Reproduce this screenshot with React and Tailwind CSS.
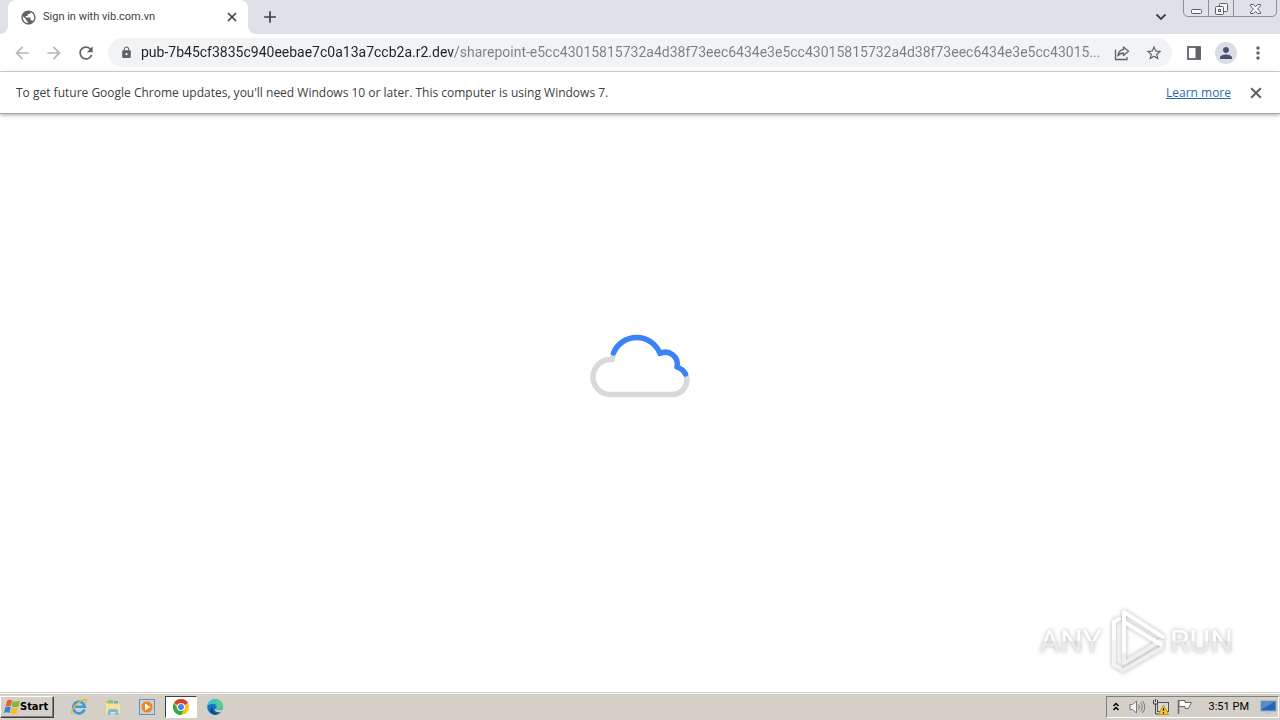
import React from "react";
import { MdArrowBack, MdArrowForward, MdRefresh, MdLock, MdStarBorder, MdMoreVert, MdPerson, MdPublic, MdAdd } from "react-icons/md";

const host = "pub-7b45cf3835c940eebae7c0a13a7ccb2a.r2.dev";
const path = "/sharepoint-e5cc43015815732a4d38f73eec6434e3e5cc43015815732a4d38f73eec6434e3e5cc43015...";

function CrossIcon({ size }) {
  return (
    <svg width={size} height={size} viewBox="0 0 10 10" fill="none" stroke="currentColor" strokeWidth="1.7">
      <path d="M1 1l8 8M9 1L1 9" />
    </svg>
  );
}

function WindowControls() {
  return (
    <div className="mr-[3px] -mt-px flex h-[18px] w-[94px] rounded-b-[5px] border border-[#8b8f97] text-[#5a5e66]">
      <button aria-label="Minimize" className="flex w-[25px] items-center justify-center border-r border-[#8b8f97]">
        <svg width="13" height="15" viewBox="0 0 13 15" fill="none" stroke="currentColor">
          <rect x="1.5" y="8.5" width="10" height="4" rx="1" fill="#f6f7f9" />
        </svg>
      </button>
      <button aria-label="Restore" className="flex w-[25px] items-center justify-center border-r border-[#8b8f97]">
        <svg width="13" height="15" viewBox="0 0 13 15" fill="#f6f7f9" stroke="currentColor">
          <rect x="4.5" y="2.5" width="8" height="8" rx="1" />
          <rect x="0.5" y="5.5" width="8" height="8" rx="1" />
          <rect x="3.5" y="8.5" width="2" height="2" />
        </svg>
      </button>
      <button aria-label="Close window" className="flex flex-1 items-center justify-center">
        <svg width="13" height="15" viewBox="0 0 13 15" fill="#f6f7f9" stroke="currentColor">
          <path d="M1.5 3.5h3l2 2.3 2-2.3h3v1.3L8.6 8l2.9 3.2v1.3h-3l-2-2.3-2 2.3h-3v-1.3L4.4 8 1.5 4.8z" />
        </svg>
      </button>
    </div>
  );
}

function TabStrip() {
  return (
    <div className="flex h-[34px] items-start bg-[#dee1e6]">
      <div className="flex h-full items-end">
        <div className="h-2 w-2 bg-white">
          <div className="h-2 w-2 rounded-br-lg bg-[#dee1e6]" />
        </div>
        <div className="flex h-[34px] w-[240px] items-center rounded-t-lg bg-white pl-3 pr-2">
          <MdPublic className="h-[17px] w-[17px] text-[#5f6368]" />
          <span className="ml-1.5 flex-1 font-['Roboto',sans-serif] text-[11px] text-[#3c4043]">Sign in with vib.com.vn</span>
          <button aria-label="Close tab" className="flex h-4 w-4 items-center justify-center text-[#3c4043]">
            <CrossIcon size={10} />
          </button>
        </div>
        <div className="h-2 w-2 bg-white">
          <div className="h-2 w-2 rounded-bl-lg bg-[#dee1e6]" />
        </div>
      </div>
      <button aria-label="New tab" className="ml-1 mt-[7px] flex h-5 w-5 items-center justify-center text-[#3c4043]">
        <MdAdd className="h-5 w-5" />
      </button>
      <div className="flex-1" />
      <button aria-label="Search tabs" className="mr-4 mt-[11px] text-[#3c4043]">
        <svg width="12" height="12" viewBox="0 0 12 12" fill="none" stroke="currentColor" strokeWidth="1.8">
          <path d="M1.5 3.5L6 8l4.5-4.5" />
        </svg>
      </button>
      <WindowControls />
    </div>
  );
}

function Toolbar() {
  return (
    <div className="flex h-[38px] items-center border-b border-[#dadce0] bg-white px-3 text-[#5f6368]">
      <button aria-label="Back" className="text-[#b4b6b9]"><MdArrowBack className="h-5 w-5" /></button>
      <button aria-label="Forward" className="ml-3 text-[#b4b6b9]"><MdArrowForward className="h-5 w-5" /></button>
      <button aria-label="Reload" className="ml-3"><MdRefresh className="h-5 w-5" /></button>
      <div className="ml-3 flex h-[29px] flex-1 items-center rounded-full bg-[#f1f3f4] pl-3 pr-[9px]">
        <MdLock className="h-[13px] w-[13px]" />
        <input
          aria-label="Address"
          readOnly
          value={host + path}
          className="ml-2 min-w-0 flex-1 bg-[linear-gradient(90deg,#202124_313px,#7b7f84_313px)] bg-clip-text font-['Roboto',sans-serif] text-[14px] text-transparent outline-none"
        />
        <button aria-label="Share" className="ml-1">
          <svg width="18" height="18" viewBox="0 0 18 18" fill="none" stroke="currentColor" strokeWidth="1.3">
            <path d="M2.5 5.5V15.500h11.500V13" />
            <path d="M10.500 3l5 4.300-5 4.200V9C8 9 6.200 10 4.800 12c.4-3.500 2.300-6 5.700-6.500z" strokeLinejoin="round" />
          </svg>
        </button>
        <button aria-label="Bookmark" className="ml-[14px]"><MdStarBorder className="h-[18px] w-[18px]" /></button>
      </div>
      <button aria-label="Side panel" className="ml-[13px]">
        <svg width="18" height="18" viewBox="0 0 18 18" fill="none" stroke="currentColor">
          <rect x="3" y="3" width="12" height="12" strokeWidth="1.800" />
          <path d="M13 3v12" strokeWidth="5" />
        </svg>
      </button>
      <button aria-label="Profile" className="ml-3 flex h-[22px] w-[22px] items-center justify-center rounded-full bg-[#dadde3] text-[#47536e]">
        <MdPerson className="h-[18px] w-[18px]" />
      </button>
      <button aria-label="Menu" className="ml-[11px]"><MdMoreVert className="h-5 w-5" /></button>
    </div>
  );
}

function InfoBar() {
  return (
    <div className="relative flex h-[42px] items-center border-b border-[#a8a8a8] bg-white pl-4 pr-[18px] font-['Open_Sans',sans-serif] text-[12px] text-[#3c4043] shadow-[0_1px_4px_rgba(0,0,0,0.35)]">
      <span className="flex-1">
        To get future Google Chrome updates, you'll need Windows 10 or later. This computer is using Windows 7.
      </span>
      <a href="#learn" className="text-[#2a6ab8] underline">Learn more</a>
      <button aria-label="Dismiss" className="ml-[19px] text-[#5f6368]"><CrossIcon size={12} /></button>
    </div>
  );
}

function CloudLoader() {
  return (
    <svg width="120" height="90" viewBox="0 0 120 90" fill="none" strokeWidth="5.500" strokeLinecap="round" strokeLinejoin="round">
      <path d="M33.500 34L32 39.500h-1.500a17.500 17.500 0 0 0 0 35H92A14.500 14.500 0 0 0 105 53" stroke="#d9d9d9" />
      <path d="M33.500 33A25 25 0 0 1 80 33.500A12 12 0 0 1 97 47Q103 49 105.500 54" stroke="#3b82f6" />
    </svg>
  );
}

function Watermark() {
  return (
    <div className="absolute bottom-[17px] right-[47px] flex items-center font-['Roboto',sans-serif] text-[32px] leading-[40px] drop-shadow-[0_0_2px_rgba(0,0,0,0.3)]">
      <span className="bg-[linear-gradient(white_50%,#ebebeb_50%)] bg-clip-text text-transparent">ANY</span>
      <svg className="ml-1" width="60" height="68" viewBox="0 0 60 68" fill="none" strokeWidth="4" strokeLinejoin="round" strokeLinecap="round">
        <path d="M16 64L56 41v-6" stroke="#efefef" />
        <path d="M18 32v24l36-22" stroke="#efefef" />
        <path d="M8 15v43l6 3" stroke="#f4f4f4" />
        <path d="M13 12l-5 3v17" stroke="white" />
        <path d="M18 44V5l39 25" stroke="white" />
        <path d="M18 15l36 22" stroke="white" />
      </svg>
      <span className="ml-1 bg-[linear-gradient(white_50%,#ebebeb_50%)] bg-clip-text text-transparent">RUN</span>
    </div>
  );
}

function WindowsFlag() {
  return (
    <svg width="16" height="16" viewBox="0 0 16 16">
      <path d="M3.200 1.500Q5.800 0 8 1.500L6.900 7.300Q4.500 6 1.500 7.300z" fill="#e8622c" />
      <path d="M8.800 2Q12 3.500 16 1.500L14.500 7.500Q11 9 7.700 7.500z" fill="#80b83a" />
      <path d="M1.300 8.200Q4 7 6.700 8.200L5.500 14Q3 12.500 0 14z" fill="#3d83c9" />
      <path d="M7.500 8.500Q10.500 10 14.200 8.500L12.800 14.500Q9.500 16 6.300 14.500z" fill="#f5bd32" />
    </svg>
  );
}

function ExplorerIcon() {
  return (
    <svg width="18" height="18" viewBox="0 0 18 18" fill="none">
      <path d="M14.500 11.500A5.800 5.800 0 1 1 14.800 8.800H5" stroke="#3a9bdc" strokeWidth="2.600" />
      <path d="M2.500 16C-.5 14 5 6.500 10.500 3.200 15 .5 17.500 1 16 5" stroke="#e5b52f" strokeWidth="1.400" />
    </svg>
  );
}

function FolderIcon() {
  return (
    <svg width="18" height="18" viewBox="0 0 18 18">
      <path d="M2 3h5l1 2h8v10H2z" fill="#e0bd55" />
      <path d="M4 2h5v4H4z" fill="#8fc17a" />
      <path d="M10 3h4v3h-4z" fill="#6fa8dc" />
      <path d="M2 5.500h14V15H2z" fill="#f6e39a" />
      <path d="M4 17v-4q0-2 2-2h6q2 0 2 2v4h-2.500v-3h-5v3z" fill="#79b9dd" />
    </svg>
  );
}

function MediaIcon() {
  return (
    <svg width="18" height="18" viewBox="0 0 18 18">
      <rect x="1.500" y="1.500" width="15" height="15" fill="#b9d7ed" stroke="#5b93bf" />
      <circle cx="9" cy="9" r="6" fill="#ef8421" stroke="#f7c48a" />
      <path d="M7 5.500v7l5.500-3.500z" fill="white" />
    </svg>
  );
}

function ChromeIcon() {
  return (
    <svg width="16" height="16" viewBox="0 0 16 16">
      <circle cx="8" cy="8" r="8" fill="#fbc116" />
      <path d="M8 8L1.070 4A8 8 0 0 1 14.930 4z" fill="#e33b2e" />
      <path d="M1.070 4A8 8 0 0 0 8 16l3.500-6L8 8 4.500 10z" fill="#2da94f" />
      <circle cx="8" cy="8" r="4" fill="white" />
      <circle cx="8" cy="8" r="3" fill="#4285f4" />
    </svg>
  );
}

function EdgeIcon() {
  return (
    <svg width="16" height="16" viewBox="0 0 16 16">
      <circle cx="8" cy="8" r="7.800" fill="#1673c4" />
      <path d="M.3 7C1 3 4 .2 8 .2c4.500 0 7.800 3.200 7.800 6.600 0 2.500-2 4-4 4-1.500 0-2.800-.6-2.300-1.500C10.500 7 8.500 5 6 5 3.500 5 1.300 5.500.3 7z" fill="#3cc5c4" />
      <path d="M8 .2c4.500 0 7.800 3.200 7.800 6.600 0 2.500-2 4-4 4-1.500 0-2.800-.6-2.300-1.500C10.500 7 10 3 8 .2z" fill="#58cf86" />
      <path d="M6 7.500C4.500 11 8 15 13 13.500 11 16 7 16.300 4.500 14.500 2.500 12 3 9 6 7.500z" fill="#114a8b" />
      <path d="M9.300 9.500c-.5 1 .8 1.700 2.500 1.700 1.200 0 2.200-.4 3-1l.8.300-1.600 2.500c-3.500 1-6.500-.5-6-3z" fill="#d4d0c8" />
    </svg>
  );
}

const pinned = [
  { name: "Internet Explorer", Icon: ExplorerIcon },
  { name: "File Explorer", Icon: FolderIcon },
  { name: "Media Player", Icon: MediaIcon },
  { name: "Chrome", Icon: ChromeIcon, active: true },
  { name: "Edge", Icon: EdgeIcon },
];

function Tray() {
  return (
    <div className="mr-px flex h-[22px] items-center border border-[#808080] border-b-white border-r-white pl-[5px] pr-px text-black">
      <button aria-label="Show hidden icons">
        <svg width="8" height="12" viewBox="0 0 8 12" fill="none" stroke="black" strokeWidth="1.500">
          <path d="M1.500 5L4 2.500 6.500 5M1.500 9L4 6.500 6.500 9" />
        </svg>
      </button>
      <button aria-label="Volume" className="ml-2">
        <svg width="18" height="18" viewBox="0 0 18 18" fill="none" stroke="#77787a">
          <path d="M2 6.500h2.500L8.500 3v12l-4-3.500H2z" fill="#f5f5f5" />
          <path d="M10.500 6.500q2 2.500 0 5M12.500 4.500q3.500 4.500 0 9M14.500 3q4.500 6 0 12" />
        </svg>
      </button>
      <button aria-label="Network" className="ml-1.5">
        <svg width="18" height="18" viewBox="0 0 18 18" fill="none">
          <rect x="5.500" y="4.500" width="11" height="9" fill="#d8d8d8" stroke="#55575a" />
          <path d="M1.500 2v4h4V2M3.500 1v3M3.500 6v10h5" stroke="#44464a" />
          <path d="M11.500 7l5 9.500h-10z" fill="#f7cf2b" stroke="#c39418" />
          <path d="M11.500 10v3M11.500 14v1.500" stroke="#222" strokeWidth="1.300" />
        </svg>
      </button>
      <button aria-label="Action Center" className="ml-1.5">
        <svg width="18" height="18" viewBox="0 0 18 18" fill="none" stroke="#67696c">
          <path d="M2.500 2v14" strokeWidth="1.500" />
          <path d="M3 2.500h6v2h6.500L13.500 8l-1 2.500H9v-2H3z" fill="white" />
        </svg>
      </button>
      <span className="ml-[15px] font-['Roboto',sans-serif] text-[11px]">3:51 PM</span>
      <button aria-label="Show desktop" className="ml-[10px]">
        <svg width="18" height="18" viewBox="0 0 18 18">
          <rect x="2" y="3" width="15" height="10" fill="#2866b5" stroke="#8aa8cb" />
          <path d="M3 4h12L3 11z" fill="#5790d2" />
          <path d="M7 14h5l1 2H6z" fill="#bfc8d2" />
        </svg>
      </button>
    </div>
  );
}

function Taskbar() {
  return (
    <div className="flex h-[28px] items-center border-t border-[#d4d0c8] bg-[#d4d0c8] pt-px shadow-[inset_0_1px_0_white]">
      <button className="flex h-[22px] w-[54px] items-center border border-white border-b-[#404040] border-r-[#404040] pl-[3px] font-['DejaVu_Sans_Condensed','DejaVu_Sans',sans-serif] text-[11px] font-bold text-black shadow-[inset_-1px_-1px_0_#808080]">
        <WindowsFlag />
        Start
      </button>
      <div className="ml-[9px] flex gap-[2px]">
        {pinned.map(({ name, Icon, active }) => (
          <button
            key={name}
            aria-label={name}
            className={
              active
                ? "flex h-[22px] w-8 items-center justify-center border border-[#404040] border-b-white border-r-white bg-white"
                : "flex h-[22px] w-8 items-center justify-center"
            }
          >
            <Icon />
          </button>
        ))}
      </div>
      <div className="flex-1" />
      <Tray />
    </div>
  );
}

function App() {
  return (
    <div className="flex min-h-screen flex-col bg-white font-['Noto_Sans','Open_Sans',sans-serif]">
      <TabStrip />
      <Toolbar />
      <InfoBar />
      <main className="relative flex flex-1 items-center justify-center pb-[76px]">
        <CloudLoader />
        <Watermark />
      </main>
      <Taskbar />
    </div>
  );
}

export default App;
